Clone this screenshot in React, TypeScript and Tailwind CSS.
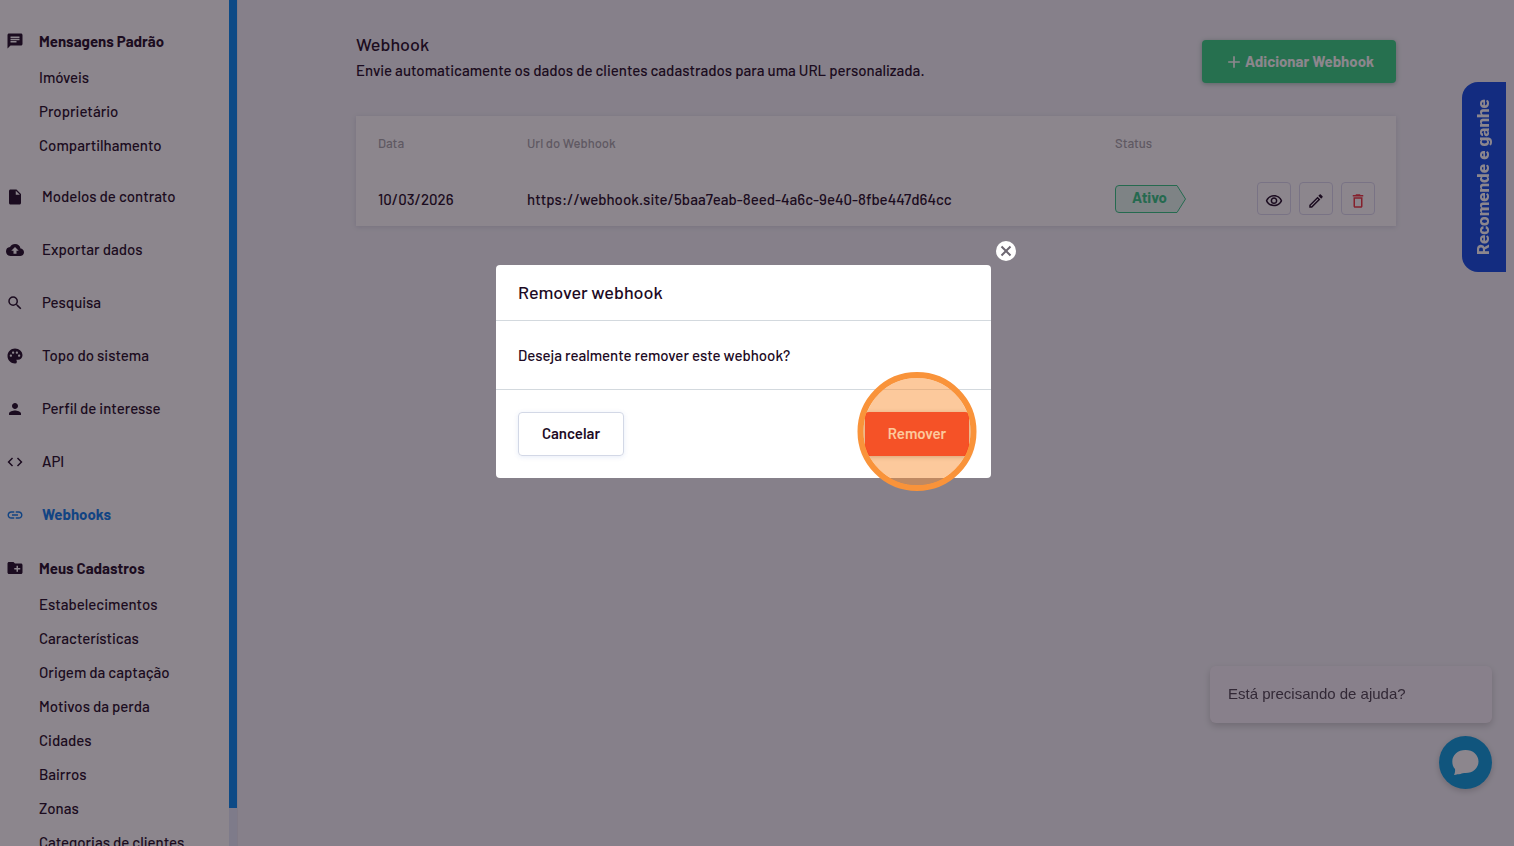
import type { IconType } from "react-icons";
import {
  MdAdd,
  MdChat,
  MdCloudUpload,
  MdCode,
  MdCreateNewFolder,
  MdDeleteOutline,
  MdInsertDriveFile,
  MdLink,
  MdOutlineEdit,
  MdOutlineVisibility,
  MdPalette,
  MdPerson,
  MdSearch,
} from "react-icons/md";

const messages = ["Imóveis", "Proprietário", "Compartilhamento"];

const items: { icon: IconType; label: string; active?: boolean }[] = [
  { icon: MdInsertDriveFile, label: "Modelos de contrato" },
  { icon: MdCloudUpload, label: "Exportar dados" },
  { icon: MdSearch, label: "Pesquisa" },
  { icon: MdPalette, label: "Topo do sistema" },
  { icon: MdPerson, label: "Perfil de interesse" },
  { icon: MdCode, label: "API" },
  { icon: MdLink, label: "Webhooks", active: true },
];

const records = [
  "Estabelecimentos",
  "Características",
  "Origem da captação",
  "Motivos da perda",
  "Cidades",
  "Bairros",
  "Zonas",
  "Categorias de clientes",
];

const actions = [
  { icon: MdOutlineVisibility, label: "Visualizar", color: "text-[#1d0a24]" },
  { icon: MdOutlineEdit, label: "Editar", color: "text-[#1d0a24]" },
  { icon: MdDeleteOutline, label: "Excluir", color: "text-[#f0323c]" },
];

function NavGroup({ icon: Icon, title, links }: { icon: IconType; title: string; links: string[] }) {
  return (
    <section>
      <h2 className="flex h-[38px] items-center gap-[15px] pl-1.5 text-[15px] font-bold">
        <Icon className="size-[18px]" />
        {title}
      </h2>
      <ul>
        {links.map((link) => (
          <li key={link}>
            <a href="#" className="flex h-[34px] items-center pl-[39px]">
              {link}
            </a>
          </li>
        ))}
      </ul>
    </section>
  );
}

function Sidebar() {
  return (
    <aside className="flex w-[238px] shrink-0 border-r border-[#e6e6f0] bg-white">
      <nav className="h-screen flex-1 overflow-hidden pt-[22px] text-[15px] font-medium whitespace-nowrap">
        <NavGroup icon={MdChat} title="Mensagens Padrão" links={messages} />
        <ul className="my-2">
          {items.map(({ icon: Icon, label, active }) => (
            <li key={label}>
              <a
                href="#"
                className={`flex h-[53px] items-center gap-[18px] pl-1.5 ${active ? "font-bold text-[#0a7bea]" : ""}`}
              >
                <Icon className="size-[18px]" />
                {label}
              </a>
            </li>
          ))}
        </ul>
        <NavGroup icon={MdCreateNewFolder} title="Meus Cadastros" links={records} />
      </nav>
      {/* Scrollbar track */}
      <div className="h-screen w-2 bg-[#e3e8f8]">
        <div className="h-[808px] bg-[#0087f0]" />
      </div>
    </aside>
  );
}

function StatusTag() {
  return (
    <span className="relative flex h-7 w-[71px] items-center pb-0.5 pl-[17px] text-[15px] font-bold text-[#30c683]">
      <svg viewBox="0 0 71 28" className="absolute inset-0" aria-hidden="true">
        <path
          d="M4 .5H62L70.5 14L62 27.5H4A3.5 3.5 0 0 1 .5 24V4A3.5 3.5 0 0 1 4 .5Z"
          fill="#e2f8ee"
          stroke="#30c683"
        />
      </svg>
      <span className="relative">Ativo</span>
    </span>
  );
}

function WebhookTable() {
  return (
    <table className="mt-8 w-full bg-white text-left text-[15px] shadow-[0_1px_5px_rgba(80,80,130,0.18)]">
      <thead className="text-[13px] text-[#a5a4a9]">
        <tr className="h-[55px]">
          <th className="w-[149px] pl-[22px] font-medium">Data</th>
          <th className="pl-[22px] font-medium">Url do Webhook</th>
          <th className="w-[142px] font-medium">Status</th>
          <th className="w-[139px]" />
        </tr>
      </thead>
      <tbody>
        <tr className="h-[55px] font-medium">
          <td className="pt-0.5 pl-[22px]">10/03/2026</td>
          <td className="pt-0.5 pl-[22px]">https://webhook.site/5baa7eab-8eed-4a6c-9e40-8fbe447d64cc</td>
          <td>
            <StatusTag />
          </td>
          <td>
            <div className="flex gap-2">
              {actions.map(({ icon: Icon, label, color }) => (
                <button
                  key={label}
                  type="button"
                  aria-label={label}
                  className={`flex h-[33px] w-[34px] items-center justify-center rounded border border-[#d9d9ee] pt-1 ${color}`}
                >
                  <Icon className="size-[18px]" />
                </button>
              ))}
            </div>
          </td>
        </tr>
      </tbody>
    </table>
  );
}

function RemoveDialog() {
  return (
    <div className="fixed inset-0 flex items-start justify-center bg-[#1a0d1c]/50 pt-[241px]">
      <div className="flex w-[522px] flex-col">
        <button
          type="button"
          aria-label="Fechar"
          className="mr-0.5 mb-1 flex size-5 items-center justify-center self-end rounded-full bg-white text-[#6d6772]"
        >
          <svg viewBox="0 0 20 20" className="size-5" stroke="currentColor" strokeWidth="2" aria-hidden="true">
            <path d="M5.500 5.500L14.500 14.500M14.500 5.500L5.500 14.500" />
          </svg>
        </button>
        <div role="dialog" aria-labelledby="dialog-title" className="mr-[27px] rounded bg-white">
          <h2 id="dialog-title" className="border-b border-[#d3d9de] px-[22px] pt-[15px] pb-4 text-lg leading-6 font-medium">
            Remover webhook
          </h2>
          <p className="border-b border-[#d3d9de] px-[22px] py-[22px] text-[15px] leading-6 font-medium">
            Deseja realmente remover este webhook?
          </p>
          <div className="flex justify-between p-[22px]">
            <button
              type="button"
              className="h-11 w-[106px] rounded border border-[#d3d8e6] pb-0.5 text-[15px] font-semibold shadow-[0_1px_5px_rgba(60,100,200,0.12)]"
            >
              Cancelar
            </button>
            <div className="relative">
              <button
                type="button"
                className="h-11 w-[104px] rounded bg-[#f11115] pb-0.5 text-[15px] font-semibold text-white shadow-[0_1px_5px_rgba(0,0,0,0.3)]"
              >
                Remover
              </button>
              {/* Click highlight */}
              <div className="pointer-events-none absolute -top-10 left-1/2 size-[119px] -translate-x-1/2 rounded-full border-6 border-[#f9933a] bg-[#f9933a]/50 bg-clip-padding" />
            </div>
          </div>
        </div>
      </div>
    </div>
  );
}

export default function App() {
  return (
    <div className="flex h-screen overflow-hidden bg-[#f2f3f8] font-[Barlow,Roboto,sans-serif] text-[#1d0a24]">
      <Sidebar />
      <main className="flex-1 px-6 pt-8">
        <div className="mx-auto max-w-[1040px]">
          <header className="flex items-start justify-between">
            <div>
              <h1 className="text-lg leading-6 font-medium">Webhook</h1>
              <p className="text-[15px] leading-7 font-medium">
                Envie automaticamente os dados de clientes cadastrados para uma URL personalizada.
              </p>
            </div>
            <button
              type="button"
              className="mt-2 flex h-[43px] items-center gap-px rounded bg-[#32d382] px-[22px] text-[15px] font-bold text-white shadow-[0_1px_5px_rgba(0,80,50,0.35)]"
            >
              <MdAdd className="size-5" />
              Adicionar Webhook
            </button>
          </header>
          <WebhookTable />
        </div>
      </main>

      <button
        type="button"
        className="fixed top-[82px] right-2 flex h-[190px] w-11 rotate-180 items-center justify-center rounded-r-2xl bg-[#0c4be4] font-[Roboto,sans-serif] text-[17px] font-extrabold text-white [writing-mode:vertical-rl]"
      >
        Recomende e ganhe
      </button>

      <div className="fixed right-[22px] bottom-[57px] flex flex-col items-end gap-[13px] font-['Liberation_Sans',Arial,sans-serif]">
        <p className="flex h-[57px] w-[282px] items-center rounded-md bg-[#f7f2fa] pl-[18px] text-[15px] text-[#4a4350] shadow-[0_3px_7px_rgba(0,0,0,0.18)]">
          Está precisando de ajuda?
        </p>
        <button
          type="button"
          aria-label="Abrir chat"
          className="flex size-[53px] items-center justify-center rounded-full bg-[#069ddf] text-white shadow-[0_2px_6px_rgba(0,0,0,0.2)]"
        >
          <svg viewBox="0 0 27 25" className="w-[27px]" fill="currentColor" aria-hidden="true">
            <path d="M13.5 0C21 0 26.5 4.800 26.500 11.500S21 23 13.500 23C11.500 23 10 23.200 8.500 23.900C6.500 24 4.500 24.400 2 25C3 23 3.300 21 3 19C1.200 17 .3 14.500 .3 11.500C.3 4.800 6 0 13.500 0Z" />
          </svg>
        </button>
      </div>

      <RemoveDialog />
    </div>
  );
}
